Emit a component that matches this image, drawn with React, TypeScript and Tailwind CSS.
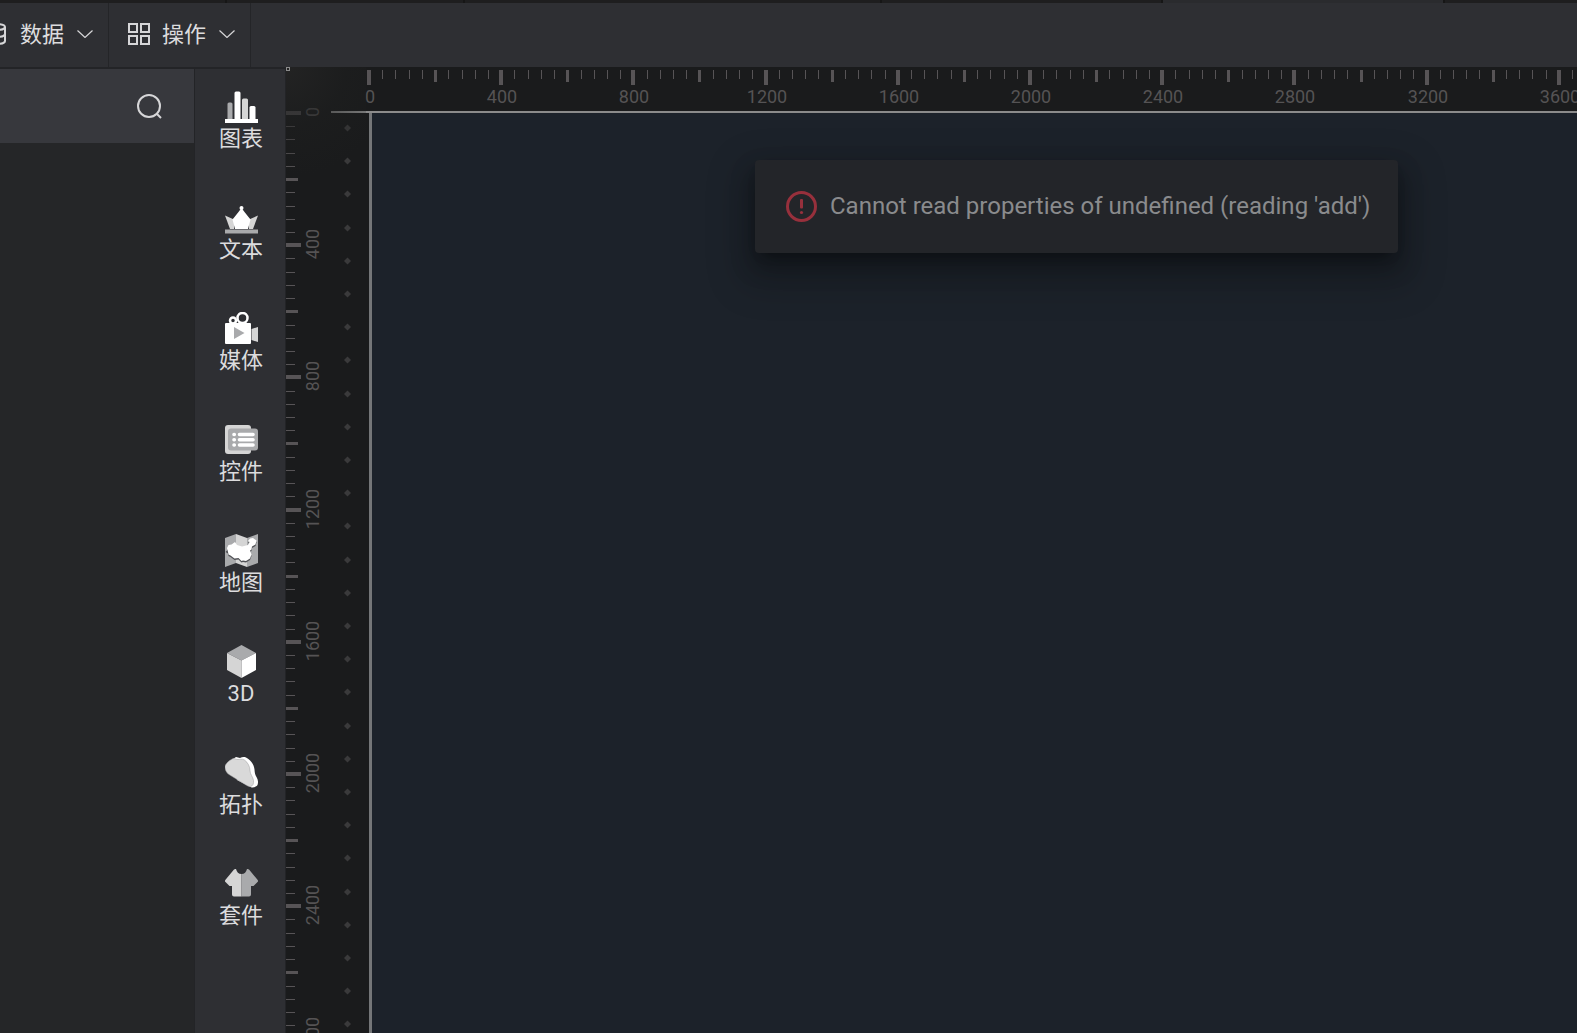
import React from 'react';

const TICK_STEP = 40;
const PX_PER_MAJOR = 132.2;

const V_ORIGIN = 46;
const H_ORIGIN = 38;

const makeTicks = (lastUnit: number) =>
  Array.from({ length: lastUnit / TICK_STEP + 1 }, (_, i) => {
    const isMajor = i % 10 === 0;
    const isMid = !isMajor && i % 5 === 0;
    return {
      value: i * TICK_STEP,
      offset: Math.round((i * PX_PER_MAJOR) / 10),
      length: isMajor ? 15 : isMid ? 12 : 9,
      thickness: isMajor ? 4 : isMid ? 3 : 1,
      isMajor,
    };
  });

const verticalTicks = makeTicks(2800);
const horizontalTicks = makeTicks(3640);

const dots = Array.from({ length: 28 }, (_, i) => Math.round(15 + i * 33.2));

const ChartIcon = () => (
  <svg viewBox="0 0 33 33" className="size-[33px]">
    <path d="M2.5 29V14A1.5 1.5 0 0 1 4 12.5h2A1.5 1.5 0 0 1 7.5 14v15z" fill="#a9aaac" />
    <path d="M9.500 29V3A1.500 1.500 0 0 1 11 1.500h3A1.500 1.500 0 0 1 15.500 3v26z" fill="#fff" />
    <path d="M17 29V10a1.500 1.500 0 0 1 1.500-1.500h3A1.500 1.500 0 0 1 23 10v19z" fill="#d5d5d5" />
    <path d="M24.500 29V17.500A1.500 1.500 0 0 1 26 16h3a1.500 1.500 0 0 1 1.500 1.500V29z" fill="#fff" />
    <rect x="0" y="29" width="33" height="4" fill="#fff" />
  </svg>
);

const CrownIcon = () => (
  <svg viewBox="0 0 33 33" className="size-[33px]">
    <path d="M0 14.500l9 4V28H5z" fill="#d5d5d5" />
    <path d="M33 14.500l-9 4V28h4z" fill="#d5d5d5" />
    <path d="M16.500 7l3 4 6 7.500L23 28H10L7.500 18.500l6-7.500z" fill="#fff" />
    <circle cx="16.500" cy="7" r="2" fill="#fff" />
    <rect x="0" y="28.500" width="33" height="4" fill="#a9aaac" />
  </svg>
);

const CameraIcon = () => (
  <svg viewBox="0 0 33 33" className="size-[33px]">
    <circle cx="8" cy="8.500" r="3" fill="none" stroke="#fff" strokeWidth="2.500" />
    <circle cx="17.500" cy="6" r="5" fill="none" stroke="#fff" strokeWidth="2.500" />
    <rect x="0" y="11" width="26" height="21" rx="1" fill="#fff" />
    <path d="M26.500 17l6.500-2v15l-6.500-2z" fill="#d5d5d5" />
    <path d="M9 15l10.500 6L9 27z" fill="#a9aaac" />
  </svg>
);

const WidgetIcon = () => (
  <svg viewBox="0 0 33 33" className="size-[33px]">
    <rect x="0" y="2" width="26" height="29" rx="3" fill="#d5d5d5" />
    <rect x="3" y="5.500" width="30" height="22" rx="3" fill="#a9aaac" />
    <g stroke="#fff" strokeWidth="3.600" strokeLinecap="round">
      <path d="M14.500 11.500h13.500M14.500 16.700h13.500M14.500 22h13.500" />
      <path d="M9 11.500h.3M9 16.700h.3M9 22h.3" />
    </g>
  </svg>
);

const MapIcon = () => (
  <svg viewBox="0 0 33 33" className="size-[33px]">
    <path d="M0 4l11-4v29L0 33z" fill="#a9aaac" />
    <path d="M11 0l11 4v29l-11-4z" fill="#d5d5d5" />
    <path d="M22 4l11-4v29l-11 4z" fill="#a9aaac" />
    <path
      d="M2.500 15l1.500-3 3-.5L10 9l2 3 5 1.500 6-1.500 1.500-3-1.500-1 2-3 3.500-.5 3 2.500-1 4-3.500 2-.5 3-1.500 1 1.500 4-1.500 4-4 2.500-3-.5-1.500.5-3-3-4 .5-4-3-2-1-.500-2.500-2.500-1.500z"
      transform="translate(0 1)"
      fill="#505155"
    />
    <path
      d="M2 14l1.500-3 3-.5L10 8l2 3 5 1.500 6-1.500 1.500-3-1.500-1 2-2.500 3-.5 3.500 2.500-1 4-3.500 2-.5 3-1.500 1 1.500 4-1.500 4-4 2.500-3-.5-1.500.5-3-3-4 .5-4-3-2-1-.5-2.500z"
      fill="#fff"
    />
  </svg>
);

const CubeIcon = () => (
  <svg viewBox="0 0 33 33" className="size-[33px]">
    <path d="M16.500 0L31 8l-14.500 7.500L2 8z" fill="#a9aaac" />
    <path d="M2 8l14.500 7.500V33L2 25z" fill="#d5d5d5" />
    <path d="M31 8l-14.500 7.500V33L31 25z" fill="#fff" />
  </svg>
);

const TopologyIcon = () => (
  <svg viewBox="0 0 33 33" className="size-[33px]">
    <path
      d="M8 3l3-2 4 1c2-1 4-1.200 6-.5 4.500 2 8 7 8.500 12 .2 3 .5 5 2 7.500 1.500 2.500 2 5 1 8-.7 1.500-3 2.500-6 2.500L12 24z"
      fill="#fff"
    />
    <path
      d="M0 10C1 7 5 4 7.500 2.800c2-.8 3.500.7 5.500.7s4-1 6.500.5c3.500 2.500 5.500 7 5.500 10.500 0 4 3 6 3.500 10 .4 3-.5 5.500-3 6-1.500.2-3-.5-4.500-1.500L4 18.500C1 16.500-.3 13 0 10z"
      fill="#d9d9d9"
      stroke="#9a9a9c"
      strokeWidth="0.500"
    />
  </svg>
);

const ShirtIcon = () => (
  <svg viewBox="0 0 33 33" className="size-[33px]">
    <path
      d="M9 2.500c.7-.7 1.300-.7 2-.5.8 3 2.500 5 5.500 5v22.500H9a2 2 0 0 1-2-2V19H4.500L.5 15c-.7-.7-.7-1.500 0-2.300z"
      fill="#d5d5d5"
    />
    <path
      d="M24 2.500c-.7-.7-1.300-.7-2-.5-.8 3-2.500 5-5.500 5v22.500H24a2 2 0 0 0 2-2V19h2.500l4-4c.7-.7.7-1.500 0-2.300z"
      fill="#a9aaac"
    />
  </svg>
);

const categories = [
  { label: '图表', Icon: ChartIcon },
  { label: '文本', Icon: CrownIcon },
  { label: '媒体', Icon: CameraIcon },
  { label: '控件', Icon: WidgetIcon },
  { label: '地图', Icon: MapIcon },
  { label: '3D', Icon: CubeIcon },
  { label: '拓扑', Icon: TopologyIcon },
  { label: '套件', Icon: ShirtIcon },
];

const DatabaseIcon = () => (
  <svg viewBox="0 0 22 22" className="size-[22px] shrink-0" fill="none" stroke="#d6d6d8" strokeWidth="2">
    <ellipse cx="11" cy="4" rx="8" ry="3" />
    <path d="M3 4v14c0 1.700 3.600 3 8 3s8-1.300 8-3V4" />
    <path d="M3 11c0 1.700 3.600 3 8 3s8-1.300 8-3" />
  </svg>
);

const GridIcon = () => (
  <svg viewBox="0 0 22 22" className="size-[22px] shrink-0" fill="none" stroke="#d6d6d8" strokeWidth="2">
    <rect x="1" y="1" width="8" height="8" />
    <rect x="13" y="1" width="8" height="8" />
    <rect x="1" y="13" width="8" height="8" />
    <rect x="13" y="13" width="8" height="8" />
  </svg>
);

const ChevronIcon = () => (
  <svg viewBox="0 0 16 8" className="h-2 w-4 shrink-0" fill="none" stroke="#d6d6d8" strokeWidth="1.200">
    <path d="M0.500 0.500L8 7.500l7.500-7" />
  </svg>
);

const MenuButton = ({ label, icon }: { label: string; icon: React.ReactNode }) => (
  <button className="flex h-full shrink-0 items-center border-r border-[#242528] pb-0.5 pl-[19px] pr-[15px] text-[22px] text-[#dcdcde]">
    {icon}
    <span className="ml-3 mr-[13px]">{label}</span>
    <ChevronIcon />
  </button>
);

const VerticalRuler = () => (
  <svg className="h-full w-[45px] shrink-0">
    {verticalTicks.map((t) => (
      <React.Fragment key={t.value}>
        <rect
          x="0"
          y={V_ORIGIN + t.offset - Math.floor(t.thickness / 2)}
          width={t.length}
          height={t.thickness}
          fill="#575456"
        />
        {t.isMajor && (
          <text
            transform={`translate(33 ${V_ORIGIN + t.offset - 1}) rotate(-90)`}
            textAnchor="middle"
            className="fill-[#555354] text-[18px]"
          >
            {t.value}
          </text>
        )}
      </React.Fragment>
    ))}
  </svg>
);

const HorizontalRuler = () => (
  <svg className="block h-11 w-full shrink-0">
    {horizontalTicks.map((t) => (
      <React.Fragment key={t.value}>
        <rect
          x={H_ORIGIN + t.offset - Math.floor(t.thickness / 2)}
          y="3"
          width={t.thickness}
          height={t.length}
          fill="#575456"
        />
        {t.isMajor && (
          <text
            x={H_ORIGIN + t.offset + 1}
            y="36"
            textAnchor="middle"
            className="fill-[#555354] text-[18px]"
          >
            {t.value}
          </text>
        )}
      </React.Fragment>
    ))}
  </svg>
);

const Toast = ({ message }: { message: string }) => (
  <div
    role="alert"
    className="absolute top-[93px] left-[469px] flex items-center rounded-[4px] bg-[#232529] py-[30px] pl-[31px] pr-7 shadow-[0_6px_12px_-8px_rgba(0,0,0,0.4),0_12px_24px_0_rgba(0,0,0,0.3),0_18px_36px_16px_rgba(0,0,0,0.16)]"
  >
    <svg viewBox="0 0 31 31" className="size-[31px] shrink-0">
      <circle cx="15.500" cy="15.500" r="14" fill="none" stroke="#97303c" strokeWidth="3" />
      <rect x="14" y="8" width="3" height="9.500" rx="1" fill="#97303c" />
      <circle cx="15.500" cy="21.500" r="1.600" fill="#97303c" />
    </svg>
    <span className="ml-[13px] whitespace-nowrap text-[24px] leading-[33px] text-[#8a8b8d]">{message}</span>
  </div>
);

export default function App() {
  return (
    <div className="flex h-screen flex-col overflow-hidden bg-[#252628] font-['Roboto','Noto_Sans_CJK_SC',sans-serif]">
      {/* Window tabs, cut off at the top */}
      <div className="grid h-[3px] shrink-0 grid-cols-[227fr_238fr_417fr_281fr_282fr_132fr] bg-[#1e1e1f]">
        <div className="border-r-2 border-[#161616]" />
        <div className="border-r-2 border-[#161616]" />
        <div className="border-r-2 border-[#161616]" />
        <div className="border-r-2 border-[#161616]" />
        <div className="border-r-2 border-[#161616] bg-[#2a2b2e]" />
        <div />
      </div>

      <header className="flex h-16 shrink-0 bg-[#2e2f33]">
        <div className="-ml-[33px] flex h-full">
          <MenuButton label="数据" icon={<DatabaseIcon />} />
          <MenuButton label="操作" icon={<GridIcon />} />
        </div>
      </header>

      <div className="flex min-h-0 flex-1">
        <aside className="w-[195px] shrink-0 border-t-2 border-r border-[#232427] bg-[#252628]">
          <div className="flex h-[74px] items-center justify-end bg-[#37383d] pr-8">
            <button aria-label="搜索">
              <svg viewBox="0 0 25 25" className="size-[25px]" fill="none" stroke="#d6d6d8" strokeWidth="2">
                <circle cx="12" cy="12" r="11" />
                <path d="M19.500 19.500l4.500 4.500" />
              </svg>
            </button>
          </div>
        </aside>

        <nav className="flex w-[91px] shrink-0 flex-col border-t-2 border-r border-[#232427] bg-[#2e2f33] pt-[21px] pl-0.5">
          {categories.map(({ label, Icon }) => (
            <button key={label} className="flex h-[111px] shrink-0 flex-col items-center text-[22px] leading-8 text-[#dcdcde]">
              <Icon />
              <span>{label}</span>
            </button>
          ))}
        </nav>

        <main className="relative flex min-w-0 flex-1 overflow-hidden bg-[#1a1b1c]">
          <VerticalRuler />
          <div className="flex min-w-0 flex-1 flex-col">
            <HorizontalRuler />
            <div className="flex min-h-0 flex-1 border-t-2 border-[#8b8b8b]">
              <svg className="h-full w-[38px] shrink-0">
                {dots.map((y) => (
                  <path key={y} d={`M16.500 ${y - 3.5}l3.500 3.500-3.500 3.500-3.500-3.500z`} fill="#3a3a3b" />
                ))}
              </svg>
              <div className="min-w-0 flex-1 border-l-[3px] border-[#747678] bg-[#1c222a]" />
            </div>
          </div>

          {/* Corner shade over the start of both rulers */}
          <div className="pointer-events-none absolute top-0 left-0 h-[120px] w-20 bg-[radial-gradient(circle_at_top_left,rgba(36,36,36,0.9),rgba(30,31,31,0.5)_60px,rgba(26,27,28,0)_110px)]" />
          <div className="absolute top-0 left-0 size-1 border border-[#8b8b8b]" />

          <Toast message="Cannot read properties of undefined (reading 'add')" />
        </main>
      </div>
    </div>
  );
}
